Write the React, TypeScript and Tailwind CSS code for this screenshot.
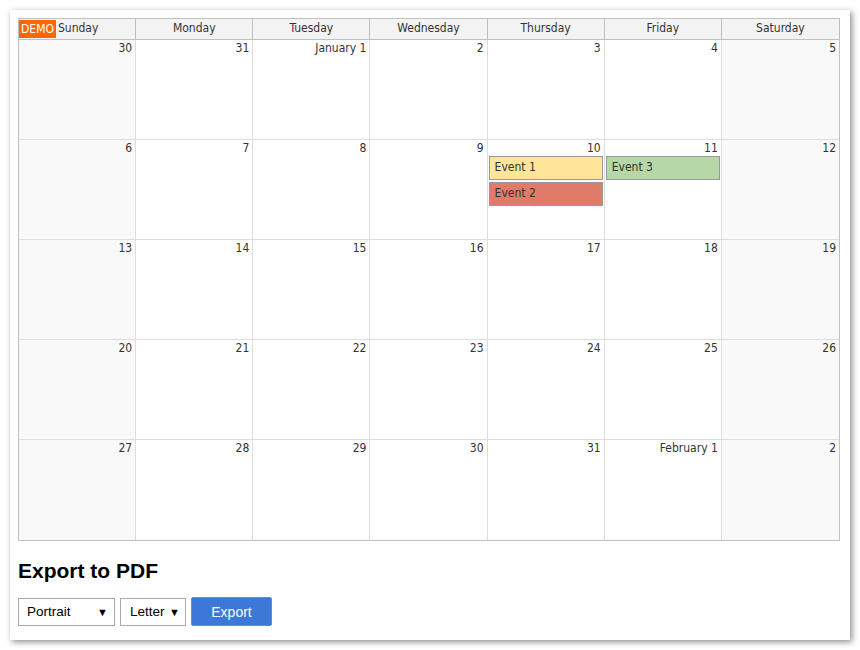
const weeks: { label: string }[][] = [
    ['30', '31', 'January 1', '2', '3', '4', '5'],
    ['6', '7', '8', '9', '10', '11', '12'],
    ['13', '14', '15', '16', '17', '18', '19'],
    ['20', '21', '22', '23', '24', '25', '26'],
    ['27', '28', '29', '30', '31', 'February 1', '2'],
].map(w => w.map(label => ({ label })));

const days = ['Sunday', 'Monday', 'Tuesday', 'Wednesday', 'Thursday', 'Friday', 'Saturday'];

const App = () => {
    return (
        <div className="w-[860px] h-[650px] bg-white p-[10px]" style={{ fontFamily: '"DejaVu Sans Condensed", "Liberation Sans", sans-serif' }}>
            <div className="w-[840px] h-[630px] bg-white p-2 shadow-[2px_2px_6px_rgba(0,0,0,0.45)]">
                {/* Calendar */}
                <div className="border border-[#c0c0c0] w-[822px]">
                    <div className="grid grid-cols-7 h-[21px] bg-[#f3f3f3] border-b border-[#c0c0c0] text-[12px] text-[#333]">
                        {days.map((d, i) => (
                            <div key={d} className={`flex items-start ${i === 0 ? 'justify-start' : 'justify-center'} ${i < 6 ? 'border-r border-[#c0c0c0]' : ''}`}>
                                {i === 0 && (
                                    <span className="mt-[1px] h-[18px] px-[2px] mr-[2px] bg-[#ff6600] text-white text-[12px] leading-[18px]">DEMO</span>
                                )}
                                <span className="leading-[18px]">{d}</span>
                            </div>
                        ))}
                    </div>
                    {weeks.map((week, wi) => (
                        <div key={wi} className={`grid grid-cols-7 ${wi < 4 ? 'h-[100px] border-b border-[#ddd]' : 'h-[100px]'}`}>
                            {week.map((day, di) => (
                                <div
                                    key={di}
                                    className={`flex flex-col ${di === 0 || di === 6 ? 'bg-[#f9f9f9]' : 'bg-white'} ${di < 6 ? 'border-r border-[#ddd]' : ''}`}
                                >
                                    <div className="text-right pr-[3px] h-[16px] text-[12px] leading-[16px] text-[#333]">{day.label}</div>
                                    {wi === 1 && di === 4 && (
                                        <div className="flex flex-col gap-[2px] px-[1px]">
                                            <div className="h-[24px] bg-[#ffe599] border border-[#999] pl-[5px] text-[12px] leading-[21px] text-[#333]">Event 1</div>
                                            <div className="h-[24px] bg-[#e07b6a] border border-[#999] pl-[5px] text-[12px] leading-[21px] text-[#333]">Event 2</div>
                                        </div>
                                    )}
                                    {wi === 1 && di === 5 && (
                                        <div className="flex flex-col px-[1px]">
                                            <div className="h-[24px] bg-[#b6d7a8] border border-[#999] pl-[5px] text-[12px] leading-[21px] text-[#333]">Event 3</div>
                                        </div>
                                    )}
                                </div>
                            ))}
                        </div>
                    ))}
                </div>

                {/* Export */}
                <h2 className="mt-[16px] text-[21px] font-bold text-black leading-[28px]" style={{ fontFamily: '"Liberation Sans", Arial, sans-serif' }}>Export to PDF</h2>
                <div className="flex items-center gap-[5px] mt-[12px]" style={{ fontFamily: '"Liberation Sans", Arial, sans-serif' }}>
                    <div className="w-[97px] h-[28px] border border-[#a9a9a9] flex items-center justify-between pl-[8px] pr-[6px] pt-[2px] text-[13.5px] text-black">
                        <span>Portrait</span>
                        <span className="text-[11px]">▼</span>
                    </div>
                    <div className="w-[66px] h-[28px] border border-[#a9a9a9] flex items-center justify-between pl-[9px] pr-[5px] pt-[2px] text-[13.5px] text-black">
                        <span>Letter</span>
                        <span className="text-[11px]">▼</span>
                    </div>
                    <button className="w-[81px] h-[29px] pt-[2px] bg-[#3c78d8] text-white text-[14px] rounded-[2px] border border-[#5a8fe0]">Export</button>
                </div>
            </div>
        </div>
    );
};

export default App;
